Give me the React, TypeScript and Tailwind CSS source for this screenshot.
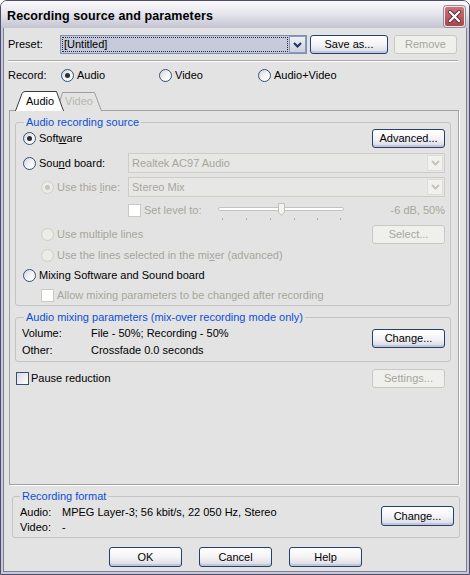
import React from "react";

type BtnProps = {
  children?: React.ReactNode;
  disabled?: boolean;
  className?: string;
};

const Btn = ({ children, disabled = false, className = "" }: BtnProps) => (
  <button
    type="button"
    disabled={disabled}
    className={`flex shrink-0 items-center justify-center rounded-[3px] border leading-none ${
      disabled
        ? "border-[#c9c9c4] bg-[#efefec] text-[#a7a69c]"
        : "border-[#23406e] bg-linear-to-b from-white via-[#f4f4f7] to-[#d8d9e3] text-black shadow-[inset_0_-2px_0_#c4c6d6]"
    } ${className}`}
  >
    {children}
  </button>
);

const Radio = ({ checked = false, disabled = false }) => (
  <span
    className={`flex h-[13px] w-[13px] shrink-0 items-center justify-center rounded-full border ${
      disabled
        ? "border-[#cfcec6] bg-[#ebebe7]"
        : "border-[#34507a] bg-linear-to-br from-[#d4d4da] via-[#f3f3f5] to-white"
    }`}
  >
    {checked && (
      <span
        className={`h-[5px] w-[5px] rounded-full ${
          disabled ? "bg-[#c6c5bd]" : "bg-[#2e2e2e]"
        }`}
      />
    )}
  </span>
);

const Check = ({ disabled = false }) => (
  <span
    className={`block h-[13px] w-[13px] shrink-0 border ${
      disabled
        ? "border-[#cbcac2] bg-white"
        : "border-[#34507a] bg-linear-to-br from-[#dadae0] to-white"
    }`}
  />
);

const Chevron = ({ color }: { color: string }) => (
  <svg width="9" height="6" viewBox="0 0 9 6">
    <path d="M1 1 L4.5 4.5 L8 1" fill="none" stroke={color} strokeWidth="2" />
  </svg>
);

const DisCombo = ({ text }: { text: string }) => (
  <div className="flex h-[20px] w-[317px] items-center border border-[#d0cec2] bg-[#e7e7e5] p-[1px]">
    <span className="flex-1 pl-[2px] text-[#a7a69c]">{text}</span>
    <span className="flex h-[16px] w-[16px] items-center justify-center border border-[#dddcd6] bg-[#f1f1ee]">
      <Chevron color="#c6c5bd" />
    </span>
  </div>
);

const Legend = ({ children, left }: { children: React.ReactNode; left: string }) => (
  <span
    className={`absolute -top-[7px] ${left} bg-[#e3e3e3] px-[2px] leading-[13px] text-[#0b4fd6]`}
  >
    {children}
  </span>
);

const Slider = () => {
  const ticks = [4, 28, 52, 76, 99, 122];
  return (
    <svg width="128" height="21" viewBox="0 0 128 21" className="shrink-0">
      <rect x="0.5" y="7.5" width="125" height="3" rx="1.5" fill="#ffffff" stroke="#c3c3c3" />
      {ticks.map((t) => (
        <rect key={t} x={t} y="18" width="1" height="2" fill="#b0b0a8" />
      ))}
      <path
        d="M60.5 3.5 H66.5 V12 L63.5 15.5 L60.5 12 Z"
        fill="#f3f2ec"
        stroke="#c2c1b6"
      />
    </svg>
  );
};

export default function App() {
  return (
    <div className="flex h-[575px] w-[470px] flex-col overflow-hidden rounded-t-[7px] border border-[#4e4e6c] bg-[#e3e3e3] font-['Liberation_Sans',Arial,sans-serif] text-[11px] leading-[13px] text-black">
      {/* title bar */}
      <div className="flex h-[27px] shrink-0 items-center justify-between bg-linear-to-b from-[#fbfbfd] via-[#e4e4ec] to-[#c4c4d2] pl-[6px] pr-[4px] pt-[3px]">
        <span className="text-[12.5px] font-bold tracking-[0.1px]">
          Recording source and parameters
        </span>
        <div className="flex h-[21px] w-[21px] items-center justify-center rounded-[3px] border border-[#f2e4e6] bg-linear-to-b from-[#cc7379] to-[#a9454d] shadow-[0_0_0_1px_#8e8e9e]">
          <svg width="13" height="13" viewBox="0 0 13 13">
            <path d="M2 2 L11 11 M11 2 L2 11" stroke="#5a2a2e" strokeWidth="4" strokeLinecap="square" />
            <path d="M2 2 L11 11 M11 2 L2 11" stroke="#ffffff" strokeWidth="2.2" strokeLinecap="square" />
          </svg>
        </div>
      </div>

      <div className="flex flex-1 flex-col border-x-2 border-b-2 border-[#c8c8d8]">
        <div className="flex flex-1 flex-col border-x border-b border-[#7e7e98]">
          {/* preset */}
          <div className="mt-[7px] flex h-[19px] items-center">
            <span className="ml-[4px] w-[52px]">Preset:</span>
            <div className="flex h-full w-[247px] border border-[#7f8fad]">
              <div className="flex-1 bg-[#c6cada] p-[1px]">
                <div className="flex h-full items-center border border-dotted border-[#2a2a2a] pl-[1px]">
                  [Untitled]
                </div>
              </div>
              <div className="flex h-full w-[17px] items-center justify-center border border-[#8a9ab8] bg-linear-to-b from-[#eef0f6] to-[#cdd1de]">
                <Chevron color="#1e3560" />
              </div>
            </div>
            <Btn className="ml-[3px] h-[19px] w-[78px]">Save as...</Btn>
            <Btn disabled className="ml-[6px] h-[19px] w-[63px]">
              Remove
            </Btn>
          </div>

          <div className="ml-[4px] mt-[6px] h-[2px] w-[450px] border-t border-b border-t-[#a8a8a8] border-b-white" />

          {/* record */}
          <div className="mt-[6px] flex h-[14px] items-center">
            <span className="ml-[4px] w-[53px]">Record:</span>
            <span className="flex w-[98px] items-center gap-[3px]">
              <Radio checked />
              Audio
            </span>
            <span className="flex w-[99px] items-center gap-[3px]">
              <Radio />
              Video
            </span>
            <span className="flex items-center gap-[3px]">
              <Radio />
              Audio+Video
            </span>
          </div>

          {/* tabs */}
          <div className="relative z-10 -mb-[1px] ml-[5px] mt-[9px] h-[20px] w-[100px]">
            <svg width="100" height="20" viewBox="0 0 100 20" className="absolute left-0 top-0">
              <path d="M48 20 L53.5 1.5 H85.5 L92.5 20" fill="#e3e3e3" stroke="#9d9d9d" />
              <path
                d="M6.5 20 L13 2.5 Q14 0.5 16 0.5 H47.5 L54.5 20 Z"
                fill="#ffffff"
                stroke="#3c3c3c"
              />
              <path d="M7 19.5 H54" stroke="#ffffff" />
            </svg>
            <div className="relative flex h-full items-center pt-[1px]">
              <span className="w-[56px] pl-[17px]">Audio</span>
              <span className="text-[#b8b7ae]">Video</span>
            </div>
          </div>

          {/* panel */}
          <div className="ml-[5px] flex h-[375px] w-[450px] flex-col border border-[#a2a2a2] pl-[5px] pr-[7px] pt-[11px] shadow-[1px_1px_0_#ffffff]">
            {/* audio recording source */}
            <div className="relative flex h-[184px] flex-col rounded-[3px] border border-[#c4c4c4] pl-[7px] pr-[5px]">
              <Legend left="left-[8px]">Audio recording source</Legend>
              <div className="mt-[5px] flex h-[20px] items-center">
                <Radio checked />
                <span className="ml-[3px]">
                  Soft<u>w</u>are
                </span>
                <span className="flex-1" />
                <Btn className="h-[19px] w-[73px]">Advanced...</Btn>
              </div>
              <div className="mt-[5px] flex h-[20px] items-center">
                <span className="flex w-[105px] items-center gap-[3px]">
                  <Radio />
                  <span>
                    Sou<u>n</u>d board:
                  </span>
                </span>
                <DisCombo text="Realtek AC97 Audio" />
              </div>
              <div className="mt-[4px] flex h-[20px] items-center">
                <span className="ml-[18px] flex w-[87px] items-center gap-[3px] text-[#a7a69c]">
                  <Radio checked disabled />
                  <span>
                    Use this <u>l</u>ine:
                  </span>
                </span>
                <DisCombo text="Stereo Mix" />
              </div>
              <div className="mt-[3px] flex h-[21px] items-center">
                <span className="ml-[105px]">
                  <Check disabled />
                </span>
                <span className="ml-[3px] w-[74px] text-[#a7a69c]">Set level to:</span>
                <Slider />
                <span className="flex-1 text-right text-[#a7a69c]">-6 dB, 50%</span>
              </div>
              <div className="mt-[3px] flex h-[21px] items-center">
                <span className="ml-[18px] flex items-center gap-[3px] text-[#a7a69c]">
                  <Radio disabled />
                  Use multiple lines
                </span>
                <span className="flex-1" />
                <Btn disabled className="h-[19px] w-[73px]">
                  Select...
                </Btn>
              </div>
              <div className="flex h-[20px] items-center">
                <span className="ml-[18px] flex items-center gap-[3px] text-[#a7a69c]">
                  <Radio disabled />
                  <span>
                    Use the lines selected in the mi<u>x</u>er (advanced)
                  </span>
                </span>
              </div>
              <div className="flex h-[20px] items-center gap-[3px]">
                <Radio />
                Mixing Software and Sound board
              </div>
              <div className="flex h-[20px] items-center">
                <span className="ml-[18px] flex items-center gap-[3px] text-[#a7a69c]">
                  <Check disabled />
                  Allow mixing parameters to be changed after recording
                </span>
              </div>
            </div>

            {/* mixing parameters */}
            <div className="relative mt-[11px] flex h-[45px] rounded-[3px] border border-[#c4c4c4] pl-[6px] pr-[5px] pt-[7px]">
              <Legend left="left-[8px]">
                Audio mixing parameters (mix-over recording mode only)
              </Legend>
              <div className="flex flex-col leading-[17px]">
                <div className="flex">
                  <span className="w-[69px]">Volume:</span>
                  <span>File - 50%; Recording - 50%</span>
                </div>
                <div className="flex">
                  <span className="w-[69px]">Other:</span>
                  <span>Crossfade 0.0 seconds</span>
                </div>
              </div>
              <span className="flex-1" />
              <Btn className="mt-[4px] h-[19px] w-[73px]">Change...</Btn>
            </div>

            {/* pause */}
            <div className="mt-[6px] flex h-[21px] items-center">
              <span className="ml-[1px]">
                <Check />
              </span>
              <span className="ml-[2px]">Pause reduction</span>
              <span className="flex-1" />
              <Btn disabled className="mr-[6px] h-[19px] w-[73px]">
                Settings...
              </Btn>
            </div>
          </div>

          {/* recording format */}
          <div className="relative ml-[8px] mt-[11px] flex h-[42px] w-[448px] rounded-[3px] border border-[#c4c4c4] pl-[7px] pr-[5px] pt-[8px]">
            <Legend left="left-[7px]">Recording format</Legend>
            <div className="flex flex-col leading-[15px]">
              <div className="flex">
                <span className="w-[42px]">Audio:</span>
                <span>MPEG Layer-3; 56 kbit/s, 22 050 Hz, Stereo</span>
              </div>
              <div className="flex">
                <span className="w-[42px]">Video:</span>
                <span>-</span>
              </div>
            </div>
            <span className="flex-1" />
            <Btn className="mt-[1px] h-[20px] w-[73px]">Change...</Btn>
          </div>

          {/* dialog buttons */}
          <div className="ml-[105px] mt-[9px] flex gap-[17px]">
            <Btn className="h-[20px] w-[73px]">OK</Btn>
            <Btn className="h-[20px] w-[73px]">Cancel</Btn>
            <Btn className="h-[20px] w-[73px]">Help</Btn>
          </div>
        </div>
      </div>
    </div>
  );
}
